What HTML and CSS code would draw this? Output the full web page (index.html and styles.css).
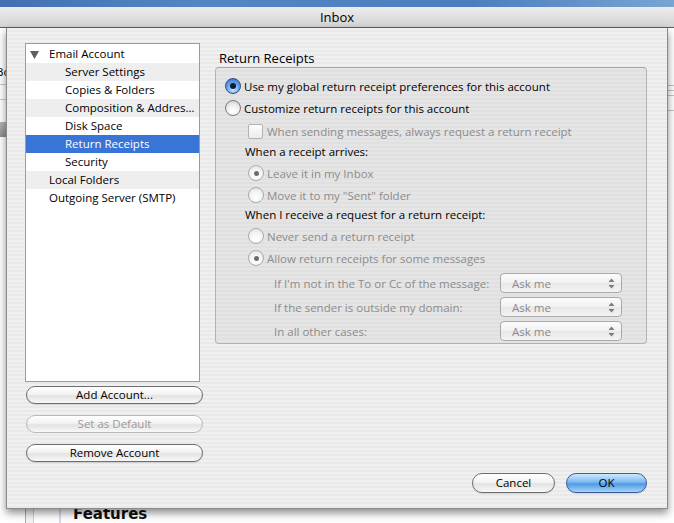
FILE: index.html
```html
<!doctype html>
<html lang="en">
    <head>
        <meta charset="UTF-8" />
        <meta name="viewport" content="width=device-width, initial-scale=1.0" />
        <title>Inbox</title>
        <link rel="stylesheet" href="styles.css">
    </head>
    <body>
        <div class="desktop"></div>
        <div class="titlebar">Inbox</div>

        <div class="window">
            <!-- the mail window that sits behind the sheet -->
            <div class="backdrop">
                <div class="bd-side">
                    <div class="bd-side-text">Bo</div>
                    <div class="bd-side-field"></div>
                    <div class="bd-side-bar"></div>
                </div>
                <div class="bd-rail"></div>
                <div class="bd-gutter"></div>
                <div class="bd-main">
                    <div class="bd-lines">
                        <div class="bd-line"></div>
                        <div class="bd-line"></div>
                        <div class="bd-line wide"></div>
                        <div class="bd-line wide"></div>
                    </div>
                    <h2 class="bd-heading">Features</h2>
                </div>
            </div>

            <div class="sheet">
                <div class="sheet-body">
                    <div class="accounts">
                        <ul class="tree">
                            <li class="lvl0 parent"><svg class="twisty" width="9" height="8" viewBox="0 0 9 8"><polygon points="0,0 9,0 4.5,8" fill="#5f5f5f"/></svg>Email Account</li>
                            <li class="lvl1 alt">Server Settings</li>
                            <li class="lvl1">Copies &amp; Folders</li>
                            <li class="lvl1 alt">Composition &amp; Addressing</li>
                            <li class="lvl1">Disk Space</li>
                            <li class="lvl1 sel">Return Receipts</li>
                            <li class="lvl1">Security</li>
                            <li class="lvl0 alt">Local Folders</li>
                            <li class="lvl0">Outgoing Server (SMTP)</li>
                        </ul>
                        <button class="btn side-btn first">Add Account...</button>
                        <button class="btn side-btn" disabled>Set as Default</button>
                        <button class="btn side-btn">Remove Account</button>
                    </div>

                    <div class="pane">
                        <div class="pane-title">Return Receipts</div>
                        <div class="group">
                            <div class="opt">
                                <span class="radio on"></span>
                                <span>Use my global return receipt preferences for this account</span>
                            </div>
                            <div class="opt">
                                <span class="radio"></span>
                                <span>Customize return receipts for this account</span>
                            </div>
                            <div class="opt sub check-row">
                                <span class="check"></span>
                                <span class="dim">When sending messages, always request a return receipt</span>
                            </div>
                            <div class="note n1">When a receipt arrives:</div>
                            <div class="opt sub gap1">
                                <span class="radio dis dot"></span>
                                <span class="dim">Leave it in my Inbox</span>
                            </div>
                            <div class="opt sub">
                                <span class="radio dis"></span>
                                <span class="dim">Move it to my "Sent" folder</span>
                            </div>
                            <div class="note n2">When I receive a request for a return receipt:</div>
                            <div class="opt sub gap2">
                                <span class="radio dis"></span>
                                <span class="dim">Never send a return receipt</span>
                            </div>
                            <div class="opt sub">
                                <span class="radio dis dot"></span>
                                <span class="dim">Allow return receipts for some messages</span>
                            </div>
                            <div class="sel-row">
                                <span class="sel-label dim">If I'm not in the To or Cc of the message:</span>
                                <div class="select">
                                    <span>Ask me</span>
                                    <span class="arrows"><svg width="7" height="11" viewBox="0 0 7 11"><polygon points="0.5,4 3.5,0.5 6.5,4" fill="#7b7b7b"/><polygon points="0.5,7 3.5,10.5 6.5,7" fill="#7b7b7b"/></svg></span>
                                </div>
                            </div>
                            <div class="sel-row">
                                <span class="sel-label dim">If the sender is outside my domain:</span>
                                <div class="select">
                                    <span>Ask me</span>
                                    <span class="arrows"><svg width="7" height="11" viewBox="0 0 7 11"><polygon points="0.5,4 3.5,0.5 6.5,4" fill="#7b7b7b"/><polygon points="0.5,7 3.5,10.5 6.5,7" fill="#7b7b7b"/></svg></span>
                                </div>
                            </div>
                            <div class="sel-row">
                                <span class="sel-label dim">In all other cases:</span>
                                <div class="select">
                                    <span>Ask me</span>
                                    <span class="arrows"><svg width="7" height="11" viewBox="0 0 7 11"><polygon points="0.5,4 3.5,0.5 6.5,4" fill="#7b7b7b"/><polygon points="0.5,7 3.5,10.5 6.5,7" fill="#7b7b7b"/></svg></span>
                                </div>
                            </div>
                        </div>
                    </div>
                </div>

                <div class="sheet-actions">
                    <button class="btn btn-cancel">Cancel</button>
                    <button class="btn btn-ok">OK</button>
                </div>
            </div>
        </div>
    </body>
</html>
```

FILE: styles.css
```css
* {
    margin: 0;
    padding: 0;
    box-sizing: border-box;
}
body {
    width: 674px;
    height: 523px;
    overflow: hidden;
    font-family: "Open Sans", "DejaVu Sans", sans-serif;
    font-size: 11.5px;
    color: #000;
    background: #fff;
}

.desktop {
    height: 7px;
    background: linear-gradient(90deg, #4270b2 0%, #5586c3 30%, #4c7ebe 70%, #79a5d4 100%);
}
.titlebar {
    height: 21px;
    line-height: 20px;
    text-align: center;
    font-size: 13px;
    background: linear-gradient(#ededed, #d3d3d3);
    border-bottom: 1px solid #5e5e5e;
}

.window {
    position: relative;
    height: 495px;
    background: #fff;
}

/* window behind the sheet */
.backdrop {
    display: flex;
    height: 100%;
}
.bd-side {
    width: 25px;
    padding-top: 36px;
    overflow: hidden;
}
.bd-side-text {
    margin-left: -4px;
    height: 21px;
    line-height: 16px;
    border-bottom: 1px solid #c9c9c9;
}
.bd-side-field {
    height: 15px;
    border-bottom: 1px solid #c9c9c9;
}
.bd-side-bar {
    margin-top: 22px;
    height: 15px;
    background: linear-gradient(#b5b5b5, #8e8e8e);
}
.bd-rail {
    width: 9px;
    border-left: 1px solid #a9a9a9;
    border-right: 1px solid #cfcfcf;
    background: #f4f4f4;
}
.bd-gutter {
    width: 27px;
    border-right: 2px solid #d9d9ee;
}
.bd-main {
    flex: 1;
    display: flex;
    flex-direction: column;
    padding-left: 12px;
}
.bd-lines {
    margin-top: 57px;
}
.bd-line {
    height: 5px;
    border-top: 1px solid #c4c4c4;
}
.bd-line.wide {
    height: 15px;
}
.bd-heading {
    margin-top: auto;
    margin-bottom: 1px;
    font-family: "DejaVu Sans", sans-serif;
    font-size: 15px;
    line-height: 15px;
    font-weight: 700;
    color: #111;
}

/* the preferences sheet */
.sheet {
    position: absolute;
    left: 6px;
    top: 0;
    width: 662px;
    height: 481px;
    display: flex;
    flex-direction: column;
    padding: 15px 20px 15px 18px;
    background: repeating-linear-gradient(#f0f0f0 0 2px, #e9e9e9 2px 4px);
    border: 1px solid #8a8a8a;
    border-top: 0;
    box-shadow: 0 4px 8px rgba(0, 0, 0, 0.45);
}
.sheet-body {
    display: grid;
    grid-template-columns: 178px 432px;
    column-gap: 12px;
}

.accounts {
    display: flex;
    flex-direction: column;
}
.tree {
    list-style: none;
    width: 175px;
    height: 339px;
    padding-top: 1px;
    background: #fff;
    border: 1px solid #9c9c9c;
}
.tree li {
    height: 18px;
    line-height: 18px;
    padding-right: 4px;
    white-space: nowrap;
    overflow: hidden;
    text-overflow: ellipsis;
}
.tree .lvl0 {
    padding-left: 23px;
}
.tree .lvl1 {
    padding-left: 39px;
}
.tree .parent {
    padding-left: 4px;
}
.twisty {
    margin-right: 10px;
    vertical-align: -1px;
}
.tree .alt {
    background: #eeeeee;
}
.tree .sel {
    background: #3875d7;
    color: #fff;
}

.btn {
    font: inherit;
    color: #000;
    height: 18px;
    display: flex;
    align-items: center;
    justify-content: center;
    padding-bottom: 1px;
    border: 1px solid #6e6e6e;
    border-radius: 9px;
    background: linear-gradient(#ffffff 0%, #f3f3f3 45%, #e3e3e3 55%, #f8f8f8 100%);
    box-shadow: 0 1px 1px rgba(0, 0, 0, 0.12);
}
.btn:disabled {
    color: #9b9b9b;
    border-color: #b9b9b9;
    box-shadow: none;
}
.side-btn {
    width: 177px;
    margin-left: 1px;
    margin-top: 11px;
}
.side-btn.first {
    margin-top: 4px;
}

.pane-title {
    height: 24px;
    padding: 7px 0 0 4px;
    font-size: 13px;
    line-height: 16px;
}
.group {
    height: 277px;
    padding: 7px 0 0 9px;
    border: 1px solid #b3b3b3;
    border-top-color: #a6a6a6;
    border-radius: 4px;
    background: repeating-linear-gradient(#e5e5e5 0 2px, #e0e0e0 2px 4px);
}

.opt {
    display: flex;
    align-items: center;
    gap: 3px;
    height: 22px;
}
.opt.sub {
    padding-left: 23px;
}
.check-row {
    gap: 4px;
    margin-top: 1px;
}
.gap1 {
    margin-top: 1px;
}
.gap2 {
    margin-top: 2px;
}
.note {
    padding-left: 20px;
    display: flex;
    align-items: center;
}
.n1 {
    height: 19px;
}
.n2 {
    height: 17px;
}
.dim {
    color: #8c8c8c;
}

.radio {
    position: relative;
    flex: none;
    width: 16px;
    height: 16px;
    border-radius: 50%;
    border: 1px solid #7a7a7a;
    background: radial-gradient(circle at 50% 72%, #ffffff 0%, #f2f2f2 45%, #c6c6c6 100%);
}
.radio.on {
    border-color: #2d4c82;
    background: radial-gradient(circle at 50% 75%, #cde7ff 0%, #6eaaec 45%, #2c68c2 100%);
}
.radio.on::after,
.radio.dot::after {
    content: "";
    position: absolute;
    left: 50%;
    top: 50%;
    width: 6px;
    height: 6px;
    margin: -3px 0 0 -3px;
    border-radius: 50%;
    background: #0f1d35;
}
.radio.dis {
    border-color: #aaaaaa;
    background: radial-gradient(circle at 50% 70%, #ffffff 0%, #f4f4f4 50%, #dddddd 100%);
}
.radio.dot::after {
    width: 5px;
    height: 5px;
    margin: -2.5px 0 0 -2.5px;
    background: #6d6d6d;
}
.check {
    flex: none;
    width: 15px;
    height: 15px;
    border: 1px solid #b2b2b2;
    border-radius: 2px;
    background: linear-gradient(#fdfdfd, #ececec);
}

.sel-row {
    display: flex;
    align-items: center;
    height: 20px;
    margin-top: 4px;
}
.sel-label {
    width: 275px;
    padding-left: 49px;
}
.select {
    width: 122px;
    height: 20px;
    display: flex;
    align-items: center;
    padding-left: 11px;
    color: #8a8a8a;
    border: 1px solid #a9a9a9;
    border-radius: 4px;
    background: linear-gradient(#fcfcfc 0%, #f1f1f1 50%, #e7e7e7 51%, #f4f4f4 100%);
}
.arrows {
    margin-left: auto;
    width: 20px;
    display: flex;
    justify-content: center;
}

.sheet-actions {
    margin-top: auto;
    display: flex;
    justify-content: flex-end;
    gap: 11px;
}
.btn-cancel,
.btn-ok {
    height: 20px;
    border-radius: 10px;
}
.btn-cancel {
    width: 83px;
}
.btn-ok {
    width: 81px;
    border-color: #3a5d94;
    background: linear-gradient(#cfe7fc 0%, #7cbaf0 45%, #4f9ae6 55%, #a6d4fb 100%);
}
```
